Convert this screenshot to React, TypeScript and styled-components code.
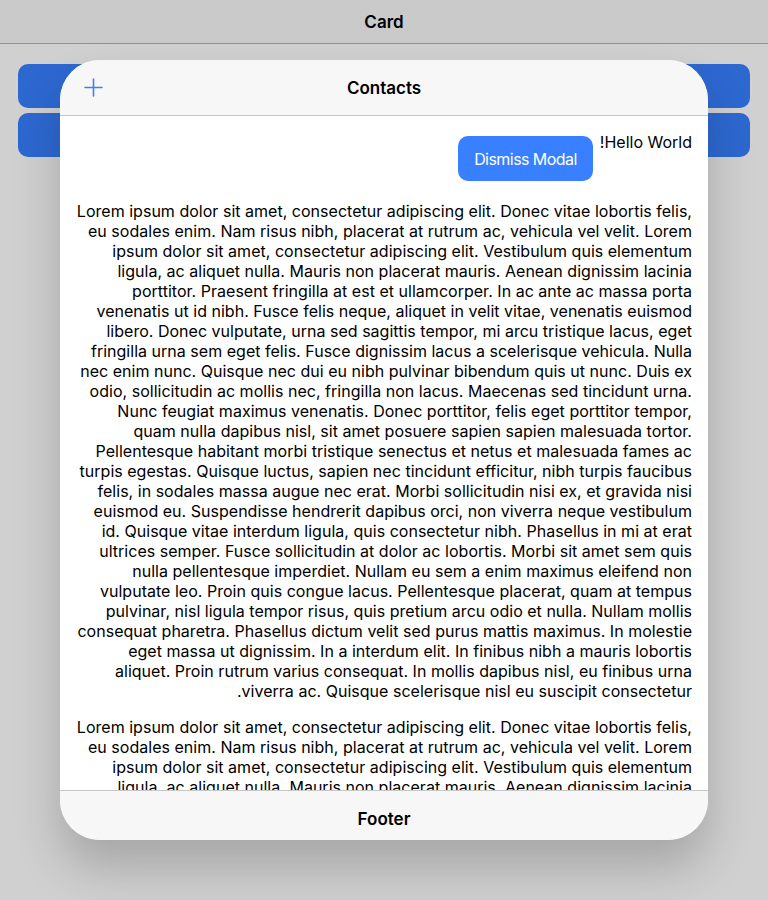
import React from "react";
import styled, { createGlobalStyle } from "styled-components";

const GlobalStyle = createGlobalStyle`
  html, body {
    margin: 0;
    padding: 0;
    background: #ffffff;
    font-family: Inter, "Noto Sans", sans-serif;
    -webkit-font-smoothing: antialiased;
  }
  * { box-sizing: border-box; }
`;

const Page = styled.div`
  width: 768px;
  height: 900px;
  position: relative;
  overflow: hidden;
  background: #ffffff;
`;

const PageToolbar = styled.header`
  height: 44px;
  display: flex;
  align-items: center;
  justify-content: center;
  background: #f8f8f8;
  border-bottom: 1px solid #b2b2b2;
  font-size: 17px;
  font-weight: 600;
  color: #000;
`;

const CardList = styled.div`
  display: flex;
  flex-direction: column;
  gap: 5px;
  padding: 20px 18px 0;
`;

const BlockButton = styled.div`
  height: 44px;
  border-radius: 10px;
  background: #3880ff;
`;

const Backdrop = styled.div`
  position: absolute;
  inset: 0;
  background: rgba(0, 0, 0, 0.185);
`;

const Modal = styled.section`
  position: absolute;
  left: 60px;
  top: 60px;
  width: 648px;
  height: 780px;
  border-radius: 40px;
  overflow: hidden;
  background: #ffffff;
  box-shadow: 0 28px 48px rgba(0, 0, 0, 0.2);
  display: flex;
  flex-direction: column;
`;

const ModalHeader = styled.header`
  flex: 0 0 56px;
  display: grid;
  grid-template-columns: 1fr auto 1fr;
  align-items: center;
  background: #f7f7f7;
  border-bottom: 1px solid #c7c7c7;
  padding: 0 24px;
`;

const Title = styled.h1`
  margin: 0;
  font-size: 17px;
  font-weight: 600;
  color: #000;
  text-align: center;
`;

const IconButton = styled.button`
  justify-self: start;
  width: 19px;
  height: 19px;
  padding: 0;
  border: 0;
  background: none;
  color: #3880ff;
  display: flex;
`;

const Content = styled.div`
  flex: 1 1 auto;
  min-height: 0;
  overflow: hidden;
  padding: 16px 16px 0;
  direction: rtl;
  color: #000;
  font-size: 16px;
  line-height: 20px;
`;

const TopRow = styled.div`
  display: flex;
  align-items: flex-start;
  gap: 7px;
`;

const Greeting = styled.span`
  font-size: 16px;
  line-height: 20px;
`;

const DismissButton = styled.button`
  margin: 4px 0;
  height: 45px;
  padding: 0 16px;
  border: 0;
  border-radius: 10px;
  background: #3880ff;
  color: #fff;
  font-family: inherit;
  font-size: 16px;
  letter-spacing: -0.55px;
`;

const Paragraph = styled.p`
  margin: 16px 0;
  text-align: right;
  letter-spacing: 0.02px;
`;

const ModalFooter = styled.footer`
  flex: 0 0 50px;
  display: flex;
  align-items: center;
  justify-content: center;
  padding-top: 6px;
  background: #f7f7f7;
  border-top: 1px solid #c7c7c7;
  font-size: 17px;
  font-weight: 600;
  color: #000;
`;

const LOREM =
  "Lorem ipsum dolor sit amet, consectetur adipiscing elit. Donec vitae lobortis felis, eu sodales enim. Nam risus nibh, placerat at rutrum ac, vehicula vel velit. Lorem ipsum dolor sit amet, consectetur adipiscing elit. Vestibulum quis elementum ligula, ac aliquet nulla. Mauris non placerat mauris. Aenean dignissim lacinia porttitor. Praesent fringilla at est et ullamcorper. In ac ante ac massa porta venenatis ut id nibh. Fusce felis neque, aliquet in velit vitae, venenatis euismod libero. Donec vulputate, urna sed sagittis tempor, mi arcu tristique lacus, eget fringilla urna sem eget felis. Fusce dignissim lacus a scelerisque vehicula. Nulla nec enim nunc. Quisque nec dui eu nibh pulvinar bibendum quis ut nunc. Duis ex odio, sollicitudin ac mollis nec, fringilla non lacus. Maecenas sed tincidunt urna. Nunc feugiat maximus venenatis. Donec porttitor, felis eget porttitor tempor, quam nulla dapibus nisl, sit amet posuere sapien sapien malesuada tortor. Pellentesque habitant morbi tristique senectus et netus et malesuada fames ac turpis egestas. Quisque luctus, sapien nec tincidunt efficitur, nibh turpis faucibus felis, in sodales massa augue nec erat. Morbi sollicitudin nisi ex, et gravida nisi euismod eu. Suspendisse hendrerit dapibus orci, non viverra neque vestibulum id. Quisque vitae interdum ligula, quis consectetur nibh. Phasellus in mi at erat ultrices semper. Fusce sollicitudin at dolor ac lobortis. Morbi sit amet sem quis nulla pellentesque imperdiet. Nullam eu sem a enim maximus eleifend non vulputate leo. Proin quis congue lacus. Pellentesque placerat, quam at tempus pulvinar, nisl ligula tempor risus, quis pretium arcu odio et nulla. Nullam mollis consequat pharetra. Phasellus dictum velit sed purus mattis maximus. In molestie eget massa ut dignissim. In a interdum elit. In finibus nibh a mauris lobortis aliquet. Proin rutrum varius consequat. In mollis dapibus nisl, eu finibus urna viverra ac. Quisque scelerisque nisl eu suscipit consectetur.";

const PlusIcon = () => (
  <svg width="19" height="19" viewBox="0 0 19 19" fill="none">
    <path d="M9.5 1v17M1 9.5h17" stroke="currentColor" strokeWidth="1.6" strokeLinecap="round" />
  </svg>
);

export default function App() {
  return (
    <>
      <GlobalStyle />
      <Page>
        <PageToolbar>Card</PageToolbar>
        <CardList>
          <BlockButton />
          <BlockButton />
        </CardList>
        <Backdrop />
        <Modal>
          <ModalHeader>
            <IconButton aria-label="Add">
              <PlusIcon />
            </IconButton>
            <Title>Contacts</Title>
            <span />
          </ModalHeader>
          <Content>
            <TopRow>
              <Greeting>Hello World!</Greeting>
              <DismissButton>Dismiss Modal</DismissButton>
            </TopRow>
            <Paragraph>{LOREM}</Paragraph>
            <Paragraph>{LOREM}</Paragraph>
          </Content>
          <ModalFooter>Footer</ModalFooter>
        </Modal>
      </Page>
    </>
  );
}
